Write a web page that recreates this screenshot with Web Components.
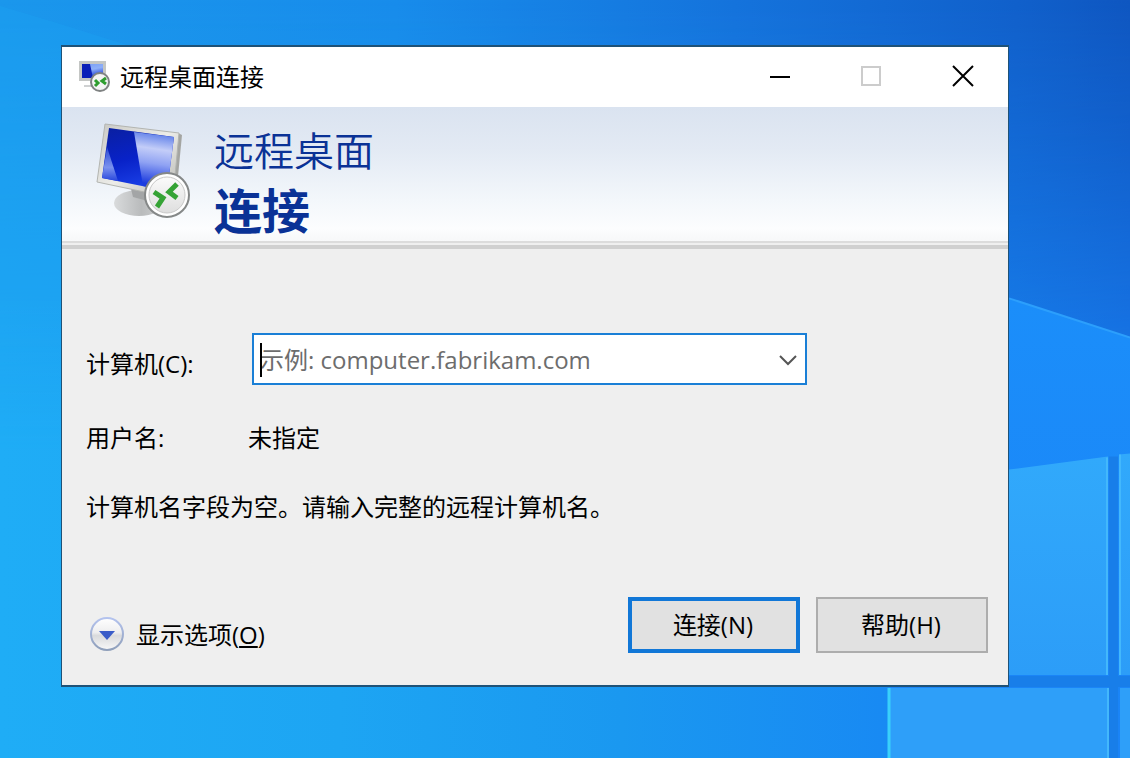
<!DOCTYPE html>
<html lang="zh-CN">
<head>
<meta charset="utf-8">
<meta name="viewport" content="width=device-width, initial-scale=1">
<title>远程桌面连接</title>
<style>
    body {
        margin: 0;
        font-family: "Open Sans", "Noto Sans CJK SC", sans-serif;
        font-size: 24px;
        line-height: 32px;
        color: #000;
    }
</style>
</head>
<body>
<desk-top>
    <rd-window>
        <rd-titlebar slot="title">远程桌面连接</rd-titlebar>
        <rd-banner slot="banner">
            远程桌面
            <span slot="strong">连接</span>
        </rd-banner>
        <rd-form></rd-form>
        <rd-disclosure slot="options">显示选项(<u>O</u>)</rd-disclosure>
        <rd-button slot="actions" primary>连接(N)</rd-button>
        <rd-button slot="actions">帮助(H)</rd-button>
    </rd-window>
</desk-top>

<script>
class DeskTop extends HTMLElement {
    connectedCallback() {
        this.attachShadow({ mode: 'open' });
        this.shadowRoot.innerHTML = `
            <style>
                :host {
                    display: block;
                    position: relative;
                    box-sizing: border-box;
                    min-height: 100vh;
                    padding: 45px 121px 72px 61px;
                    overflow: hidden;
                    background: #1a8cf4;
                }
                .wallpaper {
                    position: absolute;
                    inset: 0;
                    width: 100%;
                    height: 100%;
                }
                .windows {
                    position: relative;
                }
            </style>
            <svg class="wallpaper" viewBox="0 0 1130 758" preserveAspectRatio="none" aria-hidden="true">
                <defs>
                    <linearGradient id="top" x1="0" x2="1" y1="0" y2="0">
                        <stop offset="0" stop-color="#1b97ec"/>
                        <stop offset=".35" stop-color="#188ceb"/>
                        <stop offset=".65" stop-color="#1573dc"/>
                        <stop offset=".9" stop-color="#1160cb"/>
                        <stop offset="1" stop-color="#0f57c1"/>
                    </linearGradient>
                    <linearGradient id="bottom" x1="0" x2="1" y1="0" y2="0">
                        <stop offset="0" stop-color="#1fadf6"/>
                        <stop offset=".3" stop-color="#1da5f3"/>
                        <stop offset=".55" stop-color="#1a98f0"/>
                        <stop offset=".78" stop-color="#188af3"/>
                        <stop offset="1" stop-color="#197df0"/>
                    </linearGradient>
                    <linearGradient id="fade" x1="0" x2="0" y1="0" y2="1">
                        <stop offset="0" stop-color="#000"/>
                        <stop offset=".15" stop-color="#333"/>
                        <stop offset=".6" stop-color="#fff"/>
                    </linearGradient>
                    <mask id="down"><rect width="1130" height="758" fill="url(#fade)"/></mask>
                    <linearGradient id="beam" x1="0" x2="0" y1="0" y2="1">
                        <stop offset="0" stop-color="#1b8efa"/>
                        <stop offset="1" stop-color="#1a83f6"/>
                    </linearGradient>
                    <linearGradient id="pane" x1="0" x2="0" y1="0" y2="1">
                        <stop offset="0" stop-color="#31a9fb"/>
                        <stop offset="1" stop-color="#2c9df8"/>
                    </linearGradient>
                </defs>
                <rect width="1130" height="758" fill="url(#top)"/>
                <rect width="1130" height="758" fill="url(#bottom)" mask="url(#down)"/>
                <path d="M0 6 L60 24 L130 46 H61 V300 H0Z" fill="#1ea4f4" opacity=".35"/>
                <path d="M1009 298 L1130 337 V758 H888 V600Z" fill="url(#beam)"/>
                <path d="M1009 298 L1130 337" stroke="#2c9ffc" stroke-width="2"/>
                <path d="M1009 469 L1108 456 V674 H1009Z" fill="url(#pane)"/>
                <path d="M1119 454 L1130 453 V674 H1119Z" fill="url(#pane)"/>
                <path d="M888 675 H1130 V686 H888Z M1109 456 H1118 V758 H1109Z" fill="#187ee9"/>
                <path d="M1107 457 V674 M1120 454 V674 M1108 687 V758" stroke="#43b8fc" stroke-width="2" fill="none"/>
                <path d="M888 687 H1107 V758 H888Z M1120 687 H1130 V758 H1120Z" fill="#2e9ff9"/>
                <path d="M889 687 V758" stroke="#39d0fb" stroke-width="3"/>
            </svg>
            <div class="windows"><slot></slot></div>
        `;
    }
}
customElements.define('desk-top', DeskTop);

class RdWindow extends HTMLElement {
    connectedCallback() {
        this.attachShadow({ mode: 'open' });
        this.shadowRoot.innerHTML = `
            <style>
                :host {
                    display: block;
                    border: 1px solid #1f5277;
                    border-width: 2px 1px;
                    background: #efefef;
                }
                .content {
                    padding: 83px 20px 32px 24px;
                }
                .footer {
                    display: flex;
                    align-items: flex-end;
                    justify-content: space-between;
                    flex-wrap: wrap;
                    gap: 16px;
                    margin-top: 74px;
                }
                .actions {
                    display: flex;
                    gap: 16px;
                }
            </style>
            <slot name="title"></slot>
            <slot name="banner"></slot>
            <div class="content">
                <slot></slot>
                <div class="footer">
                    <slot name="options"></slot>
                    <div class="actions"><slot name="actions"></slot></div>
                </div>
            </div>
        `;
    }
}
customElements.define('rd-window', RdWindow);

// Monitor with the connection badge, sized by its host
class RdIcon extends HTMLElement {
    connectedCallback() {
        this.attachShadow({ mode: 'open' });
        this.shadowRoot.innerHTML = `
            <style>
                :host {
                    display: block;
                    flex: none;
                }
                svg {
                    display: block;
                    width: 100%;
                    height: 100%;
                }
            </style>
            ${this.hasAttribute('small') ? this.small() : this.large()}
        `;
    }

    small() {
        return `
            <svg viewBox="0 0 32 32" aria-hidden="true">
                <defs>
                    <linearGradient id="shine" x1="0" y1="0" x2=".2" y2="1">
                        <stop offset="0" stop-color="#7ea2f6"/>
                        <stop offset=".4" stop-color="#8fb0f8"/>
                        <stop offset="1" stop-color="#1232d6"/>
                    </linearGradient>
                </defs>
                <path d="M5 24H18V26H5Z" fill="#cfd1d2"/>
                <path d="M0 0H27V20H0Z" fill="#c4c6c4"/>
                <path d="M3 3H24V17H3Z" fill="#0a1fb8"/>
                <path d="M11 3H24V17H14Z" fill="url(#shine)"/>
                <circle cx="21" cy="21" r="9" fill="#f4f4f4" stroke="#7f8282" stroke-width="2"/>
                <path d="M16 19L19 22L16 25" fill="none" stroke="#2e9d2e" stroke-width="3"/>
                <path d="M27 17L23 20L27 23" fill="none" stroke="#2e9d2e" stroke-width="3"/>
            </svg>
        `;
    }

    large() {
        return `
            <svg viewBox="0 0 96 98" aria-hidden="true">
                <defs>
                    <linearGradient id="screen" x1="0" y1="0" x2=".3" y2="1">
                        <stop offset="0" stop-color="#0a1fa0"/>
                        <stop offset=".55" stop-color="#0822c8"/>
                        <stop offset="1" stop-color="#1a3fe6"/>
                    </linearGradient>
                    <linearGradient id="shine" x1=".2" y1="0" x2=".1" y2="1">
                        <stop offset="0" stop-color="#6685ea"/>
                        <stop offset=".25" stop-color="#c3cdf8"/>
                        <stop offset=".5" stop-color="#8fa2f3"/>
                        <stop offset=".85" stop-color="#1c3bde"/>
                    </linearGradient>
                    <linearGradient id="streak" x1="0" y1="0" x2="0" y2="1">
                        <stop offset="0" stop-color="#2a49d4"/>
                        <stop offset=".6" stop-color="#7b92ee"/>
                        <stop offset="1" stop-color="#2846dd"/>
                    </linearGradient>
                    <linearGradient id="frame" x1="0" y1="0" x2="1" y2="1">
                        <stop offset="0" stop-color="#c8c8c4"/>
                        <stop offset=".5" stop-color="#ecece8"/>
                        <stop offset="1" stop-color="#b4b4b0"/>
                    </linearGradient>
                    <linearGradient id="foot" x1="0" y1="0" x2="1" y2="0">
                        <stop offset="0" stop-color="#d9dbdc"/>
                        <stop offset=".55" stop-color="#b9bbbc"/>
                        <stop offset="1" stop-color="#cdcfd0"/>
                    </linearGradient>
                    <linearGradient id="disc" x1="0" y1="0" x2="0" y2="1">
                        <stop offset="0" stop-color="#fbfbfb"/>
                        <stop offset="1" stop-color="#dedede"/>
                    </linearGradient>
                </defs>
                <ellipse cx="43" cy="82" rx="25" ry="13" fill="url(#foot)"/>
                <path d="M35 68 L56 72 L52 80 L37 76Z" fill="#a3a5a6"/>
                <path d="M82 12 L86 14 L80 76 L76 74Z" fill="#a4a5a2"/>
                <path d="M9 3 L83 12 L77 77 L1 61Z" fill="url(#frame)" stroke="#b3b5b1"/>
                <path d="M13 7 L78 16 L71 70 L6 57Z" fill="url(#screen)"/>
                <path d="M38 11 L78 16 L71 70 L47 65Z" fill="url(#shine)"/>
                <path d="M11 26 L22 60 L6 57Z" fill="url(#streak)"/>
                <circle cx="71" cy="74" r="22" fill="#fff" stroke="#858888" stroke-width="2"/>
                <circle cx="71" cy="74" r="18" fill="url(#disc)" stroke="#c9c9c9"/>
                <path d="M58 71 L67 77 L61 86" fill="none" stroke="#35a335" stroke-width="5"/>
                <path d="M81 63 L73 71 L81 77" fill="none" stroke="#35a335" stroke-width="5"/>
            </svg>
        `;
    }
}
customElements.define('rd-icon', RdIcon);

class RdTitlebar extends HTMLElement {
    connectedCallback() {
        this.attachShadow({ mode: 'open' });
        this.shadowRoot.innerHTML = `
            <style>
                :host {
                    display: flex;
                    align-items: center;
                    height: 60px;
                    padding-left: 17px;
                    background: #fff;
                }
                rd-icon {
                    width: 32px;
                    height: 32px;
                    margin-right: 9px;
                }
                .title {
                    flex: 1;
                }
                button {
                    width: 91px;
                    height: 60px;
                    padding: 0;
                    border: 0;
                    background: none;
                    color: #000;
                }
                button:disabled {
                    color: #ccc;
                }
                svg {
                    display: block;
                    margin: auto;
                    fill: none;
                    stroke: currentColor;
                    stroke-width: 2;
                }
            </style>
            <rd-icon small></rd-icon>
            <span class="title"><slot></slot></span>
            <button type="button" aria-label="最小化">
                <svg width="22" height="24"><path d="M0 12H20"/></svg>
            </button>
            <button type="button" aria-label="最大化" disabled>
                <svg width="22" height="24"><path d="M1 2H19V20H1Z"/></svg>
            </button>
            <button type="button" aria-label="关闭">
                <svg width="22" height="24"><path d="M1 1L21 21M21 1L1 21"/></svg>
            </button>
        `;
    }
}
customElements.define('rd-titlebar', RdTitlebar);

class RdBanner extends HTMLElement {
    connectedCallback() {
        this.attachShadow({ mode: 'open' });
        this.shadowRoot.innerHTML = `
            <style>
                :host {
                    display: flex;
                    align-items: flex-start;
                    gap: 22px;
                    box-sizing: border-box;
                    height: 143px;
                    padding: 14px 34px 0;
                    color: #0a3296;
                    background:
                        linear-gradient(#dcdcdc, #dcdcdc) 0 134px / 100% 2px no-repeat,
                        linear-gradient(#d0d0d0, #d0d0d0) 0 138px / 100% 4px no-repeat,
                        linear-gradient(#dae3f0, #e3eaf4 30%, #f3f7fb 65%, #fcfdfe 85%, #f7f8f9 134px, #efefef 136px);
                }
                rd-icon {
                    width: 96px;
                    height: 98px;
                }
                .line {
                    font-size: 40px;
                    line-height: 60px;
                    font-weight: 350;
                }
                .strong {
                    font-size: 48px;
                    font-weight: 700;
                }
            </style>
            <rd-icon></rd-icon>
            <div>
                <div class="line"><slot></slot></div>
                <div class="line strong"><slot name="strong"></slot></div>
            </div>
        `;
    }
}
customElements.define('rd-banner', RdBanner);

class RdForm extends HTMLElement {
    connectedCallback() {
        this.attachShadow({ mode: 'open' });
        this.shadowRoot.innerHTML = `
            <style>
                :host {
                    display: block;
                }
                .fields {
                    display: grid;
                    grid-template-columns: 162px minmax(0, 1fr);
                    row-gap: 37px;
                    align-items: center;
                }
                label {
                    padding-top: 10px;
                }
                .combo {
                    position: relative;
                    display: flex;
                    box-sizing: border-box;
                    width: 75%;
                    height: 52px;
                    margin-left: 4px;
                    border: 2px solid #1a7fd6;
                    background: #fff;
                }
                input {
                    flex: 1;
                    min-width: 0;
                    border: 0;
                    outline: 0;
                    padding: 2px 0 0 6px;
                    background: none;
                    font: inherit;
                    color: #000;
                }
                input::placeholder {
                    color: #6d6d6d;
                    opacity: 1;
                }
                .caret {
                    position: absolute;
                    left: 6px;
                    top: 8px;
                    width: 2px;
                    height: 34px;
                    background: #000;
                }
                button {
                    width: 34px;
                    padding: 2px 0 0;
                    border: 0;
                    background: none;
                }
                svg {
                    display: block;
                    margin: auto;
                    fill: none;
                    stroke: #555;
                    stroke-width: 2;
                }
                p {
                    margin: 37px 0 0;
                }
            </style>
            <div class="fields">
                <label for="computer">计算机(C):</label>
                <div class="combo">
                    <input id="computer" type="text" placeholder="示例: computer.fabrikam.com" autocomplete="off">
                    <span class="caret"></span>
                    <button type="button" aria-label="打开列表">
                        <svg width="18" height="12"><path d="M1 2L9 10L17 2"/></svg>
                    </button>
                </div>
                <span>用户名:</span>
                <span>未指定</span>
            </div>
            <p>计算机名字段为空。请输入完整的远程计算机名。</p>
        `;
    }
}
customElements.define('rd-form', RdForm);

class RdDisclosure extends HTMLElement {
    connectedCallback() {
        this.attachShadow({ mode: 'open' });
        this.shadowRoot.innerHTML = `
            <style>
                :host {
                    display: block;
                }
                button {
                    display: flex;
                    align-items: center;
                    gap: 12px;
                    padding: 0 0 0 4px;
                    border: 0;
                    background: none;
                    font: inherit;
                    color: inherit;
                }
                svg {
                    display: block;
                }
            </style>
            <button type="button" aria-expanded="false">
                <svg width="34" height="36" viewBox="0 0 34 36" aria-hidden="true">
                    <defs>
                        <linearGradient id="knob" x1="0" y1="0" x2="0" y2="1">
                            <stop offset="0" stop-color="#fff"/>
                            <stop offset=".45" stop-color="#eeeeef"/>
                            <stop offset=".55" stop-color="#d9dadc"/>
                            <stop offset="1" stop-color="#f8f8f8"/>
                        </linearGradient>
                        <linearGradient id="ring" x1="0" y1="0" x2="0" y2="1">
                            <stop offset="0" stop-color="#b4c3ee"/>
                            <stop offset="1" stop-color="#8f9fba"/>
                        </linearGradient>
                    </defs>
                    <circle cx="17" cy="17" r="16" fill="url(#knob)" stroke="url(#ring)" stroke-width="2"/>
                    <path d="M9 14H25L17 23Z" fill="#3a5cc8"/>
                </svg>
                <span><slot></slot></span>
            </button>
        `;
    }
}
customElements.define('rd-disclosure', RdDisclosure);

class RdButton extends HTMLElement {
    connectedCallback() {
        this.attachShadow({ mode: 'open' });
        this.shadowRoot.innerHTML = `
            <style>
                :host {
                    display: block;
                }
                button {
                    width: 172px;
                    height: 56px;
                    padding: 0 2px 0 0;
                    border: 2px solid #adadad;
                    background: #e1e1e1;
                    font: inherit;
                    color: inherit;
                }
                :host([primary]) button {
                    border: 4px solid #1177d7;
                }
            </style>
            <button type="button"><slot></slot></button>
        `;
    }
}
customElements.define('rd-button', RdButton);
</script>
</body>
</html>
